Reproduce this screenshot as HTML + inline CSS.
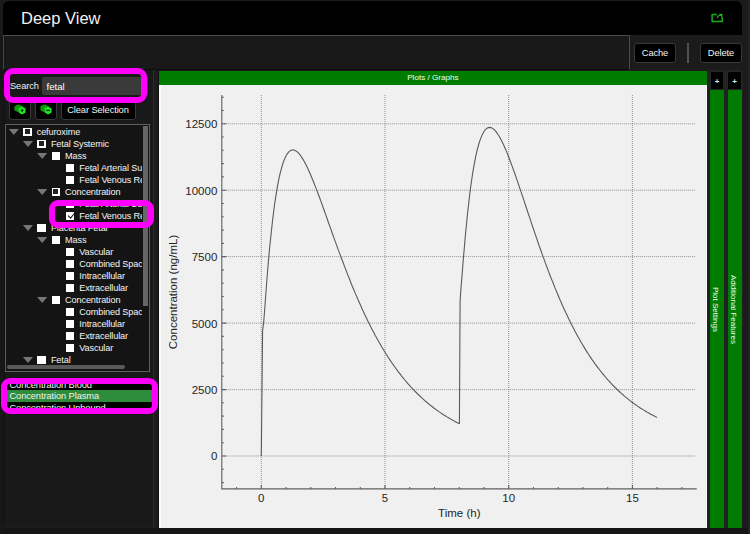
<!DOCTYPE html>
<html><head><meta charset="utf-8"><title>Deep View</title>
<style>
*{box-sizing:border-box;margin:0;padding:0}
html,body{width:750px;height:534px;overflow:hidden;background:#222;font-family:"Liberation Sans",sans-serif;}
body{position:relative;color:#fff}
.abs{position:absolute}
#win{left:0;top:0;width:747.6px;height:534px;background:#1b1b1b}
#bot{left:0;top:527.6px;width:747.6px;height:7px;background:#151515}
#lft{left:0;top:36px;width:4px;height:498px;background:#171717}
#title{left:3px;top:1px;width:739px;height:34px;background:#000;border-radius:6px 6px 0 0}
#title span{position:absolute;left:18px;top:7px;font-size:16.5px;line-height:20px;color:#f2f2f2}
#tool{left:3px;top:35px;width:627px;height:35px;background:#191919;border:1px solid #4a4a4a;border-bottom-color:#0c0c0c;border-left-color:#444}
.btn{position:absolute;background:#000;border:1px solid #383838;border-radius:3px;color:#f4f4f4;font-size:9.3px;text-align:center;letter-spacing:-.1px}
#cache{left:634px;top:42.5px;width:42px;height:20.5px;line-height:19px}
#delete{left:700px;top:42.5px;width:42px;height:20.5px;line-height:19px}
#sep{left:687px;top:43px;width:2px;height:20px;background:#505050}
#left{left:4px;top:70px;width:149.3px;height:454px;background:#191919;border-left:1.5px solid #111}
#gap{left:153.3px;top:70px;width:5.7px;height:457.6px;background:#1c1c1c;border-left:1px solid #2b2b2b;border-right:1px solid #101010}
#slabel{left:10px;top:79.8px;font-size:9.3px;line-height:12px;color:#f0f0f0;letter-spacing:-.1px}
#sinput{left:42px;top:76.5px;width:106px;height:18px;background:#3a3a3a;border-radius:2px;font-size:9.6px;line-height:19.400px;padding-left:4.5px;color:#fff}
#b1{left:9px;top:98px;width:22px;height:22px}
#b2{left:35px;top:98px;width:21.5px;height:22px}
#b3{left:60.5px;top:98px;width:75px;height:22px;line-height:23px;padding-top:0}
#tree{left:5px;top:124px;width:145px;height:248px;background:#141414;border:1px solid #5c6066;overflow:hidden}
#treein{position:absolute;left:0;top:0;width:136px;height:240px;overflow:hidden}
.row{height:12px;line-height:12px;white-space:nowrap;font-size:9.15px;letter-spacing:-.12px;color:#f4f4f4;position:relative;top:1px;left:.5px}
.row i{display:inline-block;vertical-align:top}
.ar{width:11px;height:6.4px;background:#767676;clip-path:polygon(0 0,100% 0,50% 100%);margin:2.6px 4px 0 1.8px}
.ar.no{background:transparent}
.cb{width:8.4px;height:8.4px;background:#fff;margin:1.5px 5px 0 0;position:relative}
.cb.p::after{content:"";position:absolute;left:1.7px;top:1.7px;width:5px;height:5px;background:#222}
.cb.c::after{content:"";position:absolute;left:2.7px;top:.5px;width:2.8px;height:5.4px;border:solid #111;border-width:0 1.4px 1.4px 0;transform:rotate(40deg)}
#vsb{left:142.8px;top:125.5px;width:5.2px;height:180px;background:#666}
#hsb{left:7px;top:364.5px;width:118px;height:4.5px;background:#595959;border-radius:2px}
#list{left:7px;top:378px;width:146px;height:34px;background:#000;overflow:hidden}
#list div{position:absolute;left:0;width:146px;height:11.5px;line-height:11.5px;font-size:9.3px;letter-spacing:-.1px;padding-left:2.5px;color:#f4f4f4;white-space:nowrap}
#list .sel{background:#2e8b3c}
.mg{position:absolute;border:5.5px solid #ff00fa;border-radius:9px}
#ghead{left:159px;top:70.5px;width:547.7px;height:14.2px;background:#007d00;font-size:8.1px;line-height:14.6px;text-align:center;color:#f3fff0}
#parea{left:159px;top:84.7px;width:547.7px;height:443px;background:#f0f0f0;border-left:2px solid #fafafa;border-right:1px solid #fbfbfb}
.plot{position:absolute;left:0;top:0}
.plus{position:absolute;background:#000;border:1px solid #262626;border-radius:2px;top:71px;height:18.7px;color:#e8e8e8;font-size:8px;line-height:19px;text-align:center;font-weight:bold}
.gbar{position:absolute;top:89.7px;height:438px;background:#007d00}
.vt{position:absolute;font-size:8px;line-height:10px;white-space:nowrap;color:#f0ffe8;transform-origin:0 0;transform:rotate(90deg)}
#strip{left:706.7px;top:70px;width:36px;height:457.700px;background:#222}
</style></head><body>
<div id="win" class="abs"></div><div id="bot" class="abs"></div><div id="lft" class="abs"></div>
<div id="title" class="abs"><span>Deep View</span>
<svg class="abs" style="left:706px;top:11px" width="16" height="12" viewBox="0 0 16 12"><path d="M7.8 2.6H3.1V9.6H13.2V4.400" fill="none" stroke="#17ae17" stroke-width="1.5" stroke-linejoin="round"/><path d="M8.3 6.2C8.6 4.2 10 3 12.3 2.9" fill="none" stroke="#18b418" stroke-width="1.3"/><path d="M10.2 1.4L13.6 2.2L12.6 4.9Z" fill="#1fd21f"/></svg>
</div>
<div id="tool" class="abs"></div>
<div id="cache" class="btn">Cache</div>
<div id="sep" class="abs"></div>
<div id="delete" class="btn">Delete</div>

<div id="left" class="abs"></div>
<div id="gap" class="abs"></div>
<div id="slabel" class="abs">Search</div>
<div id="sinput" class="abs">fetal</div>
<div id="b1" class="btn"><svg width="20" height="20" viewBox="0 0 20 20" style="position:absolute;left:0;top:0"><path d="M7.60 5.60L10.80 7.45L10.80 11.15L7.60 13.00L4.40 11.15L4.40 7.45Z" fill="#0a9a0a"/><path d="M8 6.800l4 2.200" stroke="#0a9a0a" stroke-width="3.500"/><path d="M12.10 7.40L15.56 9.40L15.56 13.40L12.10 15.40L8.64 13.40L8.64 9.40Z" fill="#1ee81e"/><path d="M12.100 9.700l1.700 1.700-1.700 1.700-1.700-1.700z" fill="#032"/></svg></div>
<div id="b2" class="btn"><svg width="20" height="20" viewBox="0 0 20 20" style="position:absolute;left:-.4px;top:0"><path d="M7.60 5.60L10.80 7.45L10.80 11.15L7.60 13.00L4.40 11.15L4.40 7.45Z" fill="#0a9a0a"/><path d="M8 6.800l4 2.200" stroke="#0a9a0a" stroke-width="3.500"/><path d="M12.10 7.40L15.56 9.40L15.56 13.40L12.10 15.40L8.64 13.40L8.64 9.40Z" fill="#1ee81e"/><path d="M10.200 11.400h3.800" stroke="#032" stroke-width="1.400"/></svg></div>
<div id="b3" class="btn">Clear Selection</div>
<div id="tree" class="abs"><div id="treein">
<div class="row" style="padding-left:0.0px"><i class="ar"></i><i class="cb p"></i><span>cefuroxime</span></div>
<div class="row" style="padding-left:14.2px"><i class="ar"></i><i class="cb p"></i><span>Fetal Systemic</span></div>
<div class="row" style="padding-left:28.4px"><i class="ar"></i><i class="cb u"></i><span>Mass</span></div>
<div class="row" style="padding-left:42.6px"><i class="ar no"></i><i class="cb u"></i><span>Fetal Arterial Supply</span></div>
<div class="row" style="padding-left:42.6px"><i class="ar no"></i><i class="cb u"></i><span>Fetal Venous Return</span></div>
<div class="row" style="padding-left:28.4px"><i class="ar"></i><i class="cb p"></i><span>Concentration</span></div>
<div class="row" style="padding-left:42.6px"><i class="ar no"></i><i class="cb u"></i><span>Fetal Arterial Supply</span></div>
<div class="row" style="padding-left:42.6px"><i class="ar no"></i><i class="cb c"></i><span>Fetal Venous Return</span></div>
<div class="row" style="padding-left:14.2px"><i class="ar"></i><i class="cb u"></i><span>Placenta Fetal</span></div>
<div class="row" style="padding-left:28.4px"><i class="ar"></i><i class="cb u"></i><span>Mass</span></div>
<div class="row" style="padding-left:42.6px"><i class="ar no"></i><i class="cb u"></i><span>Vascular</span></div>
<div class="row" style="padding-left:42.6px"><i class="ar no"></i><i class="cb u"></i><span>Combined Space</span></div>
<div class="row" style="padding-left:42.6px"><i class="ar no"></i><i class="cb u"></i><span>Intracellular</span></div>
<div class="row" style="padding-left:42.6px"><i class="ar no"></i><i class="cb u"></i><span>Extracellular</span></div>
<div class="row" style="padding-left:28.4px"><i class="ar"></i><i class="cb u"></i><span>Concentration</span></div>
<div class="row" style="padding-left:42.6px"><i class="ar no"></i><i class="cb u"></i><span>Combined Space</span></div>
<div class="row" style="padding-left:42.6px"><i class="ar no"></i><i class="cb u"></i><span>Intracellular</span></div>
<div class="row" style="padding-left:42.6px"><i class="ar no"></i><i class="cb u"></i><span>Extracellular</span></div>
<div class="row" style="padding-left:42.6px"><i class="ar no"></i><i class="cb u"></i><span>Vascular</span></div>
<div class="row" style="padding-left:14.2px"><i class="ar"></i><i class="cb u"></i><span>Fetal</span></div>
</div></div>
<div id="vsb" class="abs"></div>
<div id="hsb" class="abs"></div>
<div id="list" class="abs">
<div style="top:1.6px">Concentration Blood</div>
<div class="sel" style="top:12.2px;height:12px;line-height:12.5px">Concentration Plasma</div>
<div style="top:25.200px">Concentration Unbound</div>
</div>

<div id="ghead" class="abs">Plots / Graphs</div>
<div id="parea" class="abs"></div>
<svg class="plot" width="750" height="534" viewBox="0 0 750 534">
<g stroke="#909090" stroke-width="1" stroke-dasharray="1 1" fill="none"><line x1="221.8" y1="456.0" x2="695.2" y2="456.0"/><line x1="221.8" y1="389.6" x2="695.2" y2="389.6"/><line x1="221.8" y1="323.1" x2="695.2" y2="323.1"/><line x1="221.8" y1="256.6" x2="695.2" y2="256.6"/><line x1="221.8" y1="190.2" x2="695.2" y2="190.2"/><line x1="221.8" y1="123.8" x2="695.2" y2="123.8"/><line x1="261.3" y1="95.0" x2="261.3" y2="488.9"/><line x1="385.0" y1="95.0" x2="385.0" y2="488.9"/><line x1="508.7" y1="95.0" x2="508.7" y2="488.9"/><line x1="632.4" y1="95.0" x2="632.4" y2="488.9"/></g>
<g stroke="#606060" stroke-width="1.1" fill="none"><path d="M221.8 95.0 V488.9 H696.7"/><path d="M221.8 482.6 h2.0 M221.8 469.3 h2.0 M221.8 456.0 h4.5 M221.8 442.7 h2.0 M221.8 429.4 h2.0 M221.8 416.1 h2.0 M221.8 402.8 h2.0 M221.8 389.6 h4.5 M221.8 376.3 h2.0 M221.8 363.0 h2.0 M221.8 349.7 h2.0 M221.8 336.4 h2.0 M221.8 323.1 h4.5 M221.8 309.8 h2.0 M221.8 296.5 h2.0 M221.8 283.2 h2.0 M221.8 269.9 h2.0 M221.8 256.6 h4.5 M221.8 243.4 h2.0 M221.8 230.1 h2.0 M221.8 216.8 h2.0 M221.8 203.5 h2.0 M221.8 190.2 h4.5 M221.8 176.9 h2.0 M221.8 163.6 h2.0 M221.8 150.3 h2.0 M221.8 137.0 h2.0 M221.8 123.8 h4.5 M221.8 110.5 h2.0 M221.8 97.2 h2.0 M236.6 488.9 v-2.0 M261.3 488.9 v-4.0 M286.0 488.9 v-2.0 M310.8 488.9 v-2.0 M335.5 488.9 v-2.0 M360.3 488.9 v-2.0 M385.0 488.9 v-4.0 M409.7 488.9 v-2.0 M434.5 488.9 v-2.0 M459.2 488.9 v-2.0 M484.0 488.9 v-2.0 M508.7 488.9 v-4.0 M533.4 488.9 v-2.0 M558.2 488.9 v-2.0 M582.9 488.9 v-2.0 M607.7 488.9 v-2.0 M632.4 488.9 v-4.0 M657.1 488.9 v-2.0 M681.9 488.9 v-2.0"/></g>
<path d="M261.3 456.0 L262.6 330.5 L263.6 323.2 L264.6 310.7 L265.6 297.0 L266.6 283.7 L267.6 271.0 L268.6 259.1 L269.6 248.0 L270.7 237.7 L271.7 228.2 L272.7 219.4 L273.7 211.3 L274.9 202.2 L276.5 192.2 L278.0 183.4 L279.5 176.0 L281.1 169.6 L282.6 164.3 L284.2 159.9 L285.7 156.5 L287.3 153.8 L288.8 151.9 L290.4 150.6 L291.9 150.0 L293.5 149.9 L295.0 150.4 L296.6 151.3 L298.1 152.7 L299.7 154.4 L301.2 156.5 L302.7 158.9 L304.3 161.5 L305.8 164.5 L307.4 167.6 L308.9 171.0 L310.5 174.5 L312.0 178.2 L313.6 182.0 L315.1 185.9 L316.7 189.9 L318.2 194.0 L319.8 198.2 L321.3 202.4 L322.9 206.7 L324.4 211.0 L326.0 215.4 L327.5 219.7 L329.0 224.1 L330.6 228.4 L332.1 232.7 L333.7 237.1 L335.2 241.4 L336.8 245.6 L338.3 249.9 L339.9 254.1 L341.4 258.2 L343.0 262.3 L344.5 266.4 L346.1 270.4 L347.6 274.4 L349.2 278.3 L350.7 282.2 L352.2 286.0 L353.8 289.7 L355.3 293.4 L356.9 297.0 L358.4 300.6 L360.0 304.1 L361.5 307.5 L363.1 310.9 L364.6 314.2 L366.2 317.5 L367.7 320.7 L369.3 323.8 L370.8 326.9 L372.4 329.9 L373.9 332.8 L375.4 335.7 L377.0 338.5 L378.5 341.3 L380.1 344.0 L381.6 346.7 L383.2 349.3 L384.7 351.8 L386.3 354.3 L387.8 356.7 L389.4 359.1 L390.9 361.4 L392.5 363.7 L394.0 365.9 L395.6 368.0 L397.1 370.1 L398.6 372.2 L400.2 374.2 L401.7 376.2 L403.3 378.1 L404.8 380.0 L406.4 381.8 L407.9 383.6 L409.5 385.4 L411.0 387.1 L412.6 388.7 L414.1 390.4 L415.7 392.0 L417.2 393.5 L418.8 395.0 L420.3 396.5 L421.9 397.9 L423.4 399.3 L424.9 400.7 L426.5 402.0 L428.0 403.3 L429.6 404.6 L431.1 405.8 L432.7 407.0 L434.2 408.2 L435.8 409.4 L437.3 410.5 L438.9 411.6 L440.4 412.6 L442.0 413.7 L443.5 414.7 L445.1 415.7 L446.6 416.6 L448.1 417.6 L449.7 418.5 L451.2 419.4 L452.8 420.2 L454.3 421.1 L455.9 421.9 L457.4 422.7 L459.0 423.5 L459.4 423.5 L460.1 300.6 L461.1 286.9 L462.2 273.5 L463.2 260.5 L464.3 248.1 L465.3 236.3 L466.4 225.2 L467.4 214.9 L468.5 205.3 L469.5 196.3 L470.5 188.1 L471.6 180.5 L472.8 172.4 L474.4 163.3 L475.9 155.5 L477.5 148.9 L479.0 143.3 L480.6 138.6 L482.1 134.9 L483.7 132.0 L485.2 129.8 L486.7 128.4 L488.3 127.6 L489.8 127.4 L491.4 127.8 L492.9 128.6 L494.5 129.9 L496.0 131.7 L497.6 133.8 L499.1 136.2 L500.7 138.9 L502.2 141.9 L503.8 145.2 L505.3 148.7 L506.9 152.4 L508.4 156.2 L509.9 160.2 L511.5 164.4 L513.0 168.6 L514.6 173.0 L516.1 177.4 L517.7 181.9 L519.2 186.5 L520.8 191.1 L522.3 195.7 L523.9 200.3 L525.4 205.0 L527.0 209.7 L528.5 214.3 L530.1 218.9 L531.6 223.6 L533.2 228.2 L534.7 232.7 L536.2 237.2 L537.8 241.7 L539.3 246.2 L540.9 250.5 L542.4 254.9 L544.0 259.1 L545.5 263.4 L547.1 267.5 L548.6 271.6 L550.2 275.7 L551.7 279.6 L553.3 283.5 L554.8 287.4 L556.4 291.1 L557.9 294.8 L559.4 298.5 L561.0 302.0 L562.5 305.5 L564.1 309.0 L565.6 312.3 L567.2 315.6 L568.7 318.8 L570.3 322.0 L571.8 325.1 L573.4 328.1 L574.9 331.0 L576.5 333.9 L578.0 336.7 L579.6 339.5 L581.1 342.2 L582.6 344.8 L584.2 347.4 L585.7 349.9 L587.3 352.4 L588.8 354.7 L590.4 357.1 L591.9 359.4 L593.5 361.6 L595.0 363.8 L596.6 365.9 L598.1 367.9 L599.7 370.0 L601.2 371.9 L602.8 373.8 L604.3 375.7 L605.8 377.5 L607.4 379.3 L608.9 381.0 L610.5 382.7 L612.0 384.4 L613.6 386.0 L615.1 387.5 L616.7 389.0 L618.2 390.5 L619.8 392.0 L621.3 393.4 L622.9 394.7 L624.4 396.1 L626.0 397.4 L627.5 398.6 L629.1 399.9 L630.6 401.1 L632.1 402.3 L633.7 403.4 L635.2 404.5 L636.8 405.6 L638.3 406.6 L639.9 407.7 L641.4 408.7 L643.0 409.6 L644.5 410.6 L646.1 411.5 L647.6 412.4 L649.2 413.3 L650.7 414.2 L652.3 415.0 L653.8 415.8 L655.3 416.6 L656.9 417.4" fill="none" stroke="#5a5a5a" stroke-width="1.1" stroke-linejoin="round"/>
<g font-family="'Liberation Sans', sans-serif" font-size="11.5" fill="#262626"><text x="217.3" y="460.4" text-anchor="end">0</text><text x="217.3" y="393.9" text-anchor="end">2500</text><text x="217.3" y="327.5" text-anchor="end">5000</text><text x="217.3" y="261.0" text-anchor="end">7500</text><text x="217.3" y="194.6" text-anchor="end">10000</text><text x="217.3" y="128.2" text-anchor="end">12500</text><text x="261.3" y="502" text-anchor="middle">0</text><text x="385.0" y="502" text-anchor="middle">5</text><text x="508.7" y="502" text-anchor="middle">10</text><text x="632.4" y="502" text-anchor="middle">15</text><text x="459.3" y="517.2" text-anchor="middle">Time (h)</text><text transform="translate(176.6 292) rotate(-90)" text-anchor="middle">Concentration (ng/mL)</text></g>
</svg>
<div id="strip" class="abs"></div>
<div class="plus" style="left:710.3px;width:13.400px">+</div>
<div class="plus" style="left:727.3px;width:14.600px">+</div>
<div class="gbar" style="left:710px;width:14.3px"></div>
<div class="gbar" style="left:727.5px;width:14.5px"></div>
<div class="vt" style="left:720px;top:287px">Plot Settings</div>
<div class="vt" style="left:738px;top:275px">Additional Features</div>

<div class="mg" style="left:3.8px;top:67.9px;width:143.6px;height:34.7px;border-width:6.4px 6.8px 6.4px 6.3px"></div>
<div class="mg" style="left:49.2px;top:200px;width:104.8px;height:28.2px;border-width:6px"></div>
<div class="mg" style="left:1.2px;top:377.9px;width:157.1px;height:36.6px;border-width:6.5px 6.3px 6px 6.7px"></div>
</body></html>
